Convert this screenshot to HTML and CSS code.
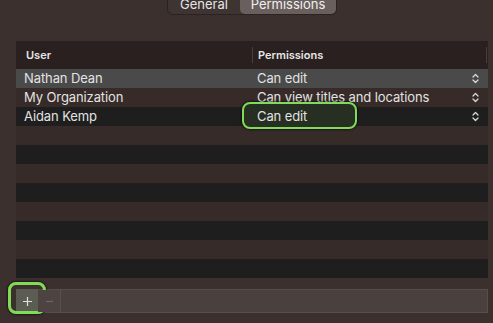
FILE: index.html
```html
<!DOCTYPE html>
<html>
<head>
<meta charset="utf-8">
<link rel="stylesheet" href="styles.css">
</head>
<body>
<div class="window">
  <div class="tabs-wrap">
    <div class="seg">
      <span class="seg-item general">General</span>
      <span class="seg-item perms active">Permissions</span>
    </div>
  </div>
  <div class="table">
    <div class="thead">
      <div class="th col-user">User</div>
      <div class="th col-perm">Permissions</div>
    </div>
    <div class="row sel">
      <div class="cell col-user">Nathan Dean</div>
      <div class="cell col-perm"><span>Can edit</span><svg class="stepper" viewBox="0 0 7 11" width="7" height="11"><path d="M1 4 L3.5 1.5 L6 4 M1 7 L3.5 9.5 L6 7" fill="none" stroke="#d8d8d8" stroke-width="1.3" stroke-linecap="round" stroke-linejoin="round"/></svg></div>
    </div>
    <div class="row odd">
      <div class="cell col-user">My Organization</div>
      <div class="cell col-perm"><span>Can view titles and locations</span><svg class="stepper" viewBox="0 0 7 11" width="7" height="11"><path d="M1 4 L3.5 1.5 L6 4 M1 7 L3.5 9.5 L6 7" fill="none" stroke="#d8d8d8" stroke-width="1.3" stroke-linecap="round" stroke-linejoin="round"/></svg></div>
    </div>
    <div class="row even">
      <div class="cell col-user">Aidan Kemp</div>
      <div class="cell col-perm"><span class="ring-wrap"><span class="ring"></span><span class="ring-text">Can edit</span></span><svg class="stepper" viewBox="0 0 7 11" width="7" height="11"><path d="M1 4 L3.5 1.5 L6 4 M1 7 L3.5 9.5 L6 7" fill="none" stroke="#d8d8d8" stroke-width="1.3" stroke-linecap="round" stroke-linejoin="round"/></svg></div>
    </div>
    <div class="row odd"></div>
    <div class="row even"></div>
    <div class="row odd"></div>
    <div class="row even"></div>
    <div class="row odd"></div>
    <div class="row even"></div>
    <div class="row odd"></div>
    <div class="row even"></div>
  </div>
  <div class="bar">
    <div class="btn plus"><span class="btn-ring"></span><svg class="glyph" viewBox="0 0 11 11" width="11" height="11"><path d="M5.5 1 V10 M1 5.5 H10" stroke="#e0e0e0" stroke-width="1.2" fill="none"/></svg></div>
    <div class="btn minus"><svg class="glyph" viewBox="0 0 11 11" width="11" height="11"><path d="M2 5.5 H9" stroke="#6f6563" stroke-width="1.2" fill="none"/></svg></div>
  </div>
</div>
</body>
</html>
```

FILE: styles.css
```css
* { box-sizing: border-box; }
html, body {
  margin: 0;
  padding: 0;
}
body {
  width: 493px;
  height: 323px;
  overflow: hidden;
  background: #3b302e;
  font-family: Inter, "Liberation Sans", sans-serif;
  color: #dedede;
}
.window {
  padding: 0 5px 0 16px;
}
.tabs-wrap {
  display: flex;
  justify-content: center;
  margin-top: -8px;
  height: 23px;
  margin-bottom: 26px;
}
.seg {
  display: flex;
  height: 23px;
  border: 1px solid #2b2321;
  border-radius: 6px;
  background: #3e3432;
}
.seg-item {
  display: flex;
  align-items: center;
  justify-content: center;
  font-size: 13px;
  color: #e4e4e4;
  height: 100%;
}
.general { width: 72px; }
.perms { width: 96px; }
.active {
  background: #695f5d;
  border-radius: 5px;
  color: #f0f0f0;
}
.table {
  width: 472px;
}
.thead {
  display: flex;
  height: 28px;
  background: #2a201f;
  align-items: center;
}
.th {
  font-size: 11px;
  font-weight: 600;
  color: #e6e6e6;
  height: 16px;
  line-height: 16px;
}
.thead .col-user {
  width: 236px;
  padding-left: 10px;
}
.thead .col-perm {
  flex: 1;
  padding-left: 5px;
  border-left: 1px solid #4a3f3d;
  border-right: 1px solid #4a3f3d;
  margin-right: 1px;
}
.row {
  display: flex;
  height: 19px;
  line-height: 19px;
  font-size: 13px;
  letter-spacing: -0.1px;
}
.row.sel { background: #4b4a4a; }
.row.odd { background: #372b29; }
.row.even { background: #1f1e1e; }
.cell.col-user {
  width: 236px;
  padding-left: 8px;
  color: #e2e2e2;
}
.cell.col-perm {
  flex: 1;
  display: flex;
  align-items: center;
  justify-content: space-between;
  padding-left: 5px;
  padding-right: 9px;
  color: #e2e2e2;
}
.stepper {
  display: block;
}
.ring-wrap {
  position: relative;
  display: inline-block;
}
.ring {
  position: absolute;
  left: -15px;
  top: -5px;
  width: 115px;
  height: 27px;
  border: 2.5px solid #7fdb58;
  border-radius: 8px;
  background: #262f22;
  box-shadow: 0 0 2px 1px rgba(0,0,0,0.55);
}
.ring-text {
  position: relative;
}
.bar {
  display: flex;
  margin-top: 11px;
  width: 472px;
  height: 24px;
  background: #4a413f;
  border: 1px solid #574d4b;
}
.btn {
  position: relative;
  display: flex;
  align-items: center;
  justify-content: center;
  height: 100%;
}
.plus {
  width: 22px;
  margin: -1px 0 -1px -1px;
  height: 24px;
  background: #5c5d52;
}
.minus {
  width: 23px;
  border-right: 1px solid #5a504e;
  background: #4d4442;
}
.glyph {
  position: relative;
  display: block;
}
.btn-ring {
  position: absolute;
  left: -8px;
  top: -7px;
  width: 38px;
  height: 32px;
  border: 3px solid #7fdb58;
  border-radius: 8px;
  box-shadow: 0 0 2px 1px rgba(0,0,0,0.5);
}
```
